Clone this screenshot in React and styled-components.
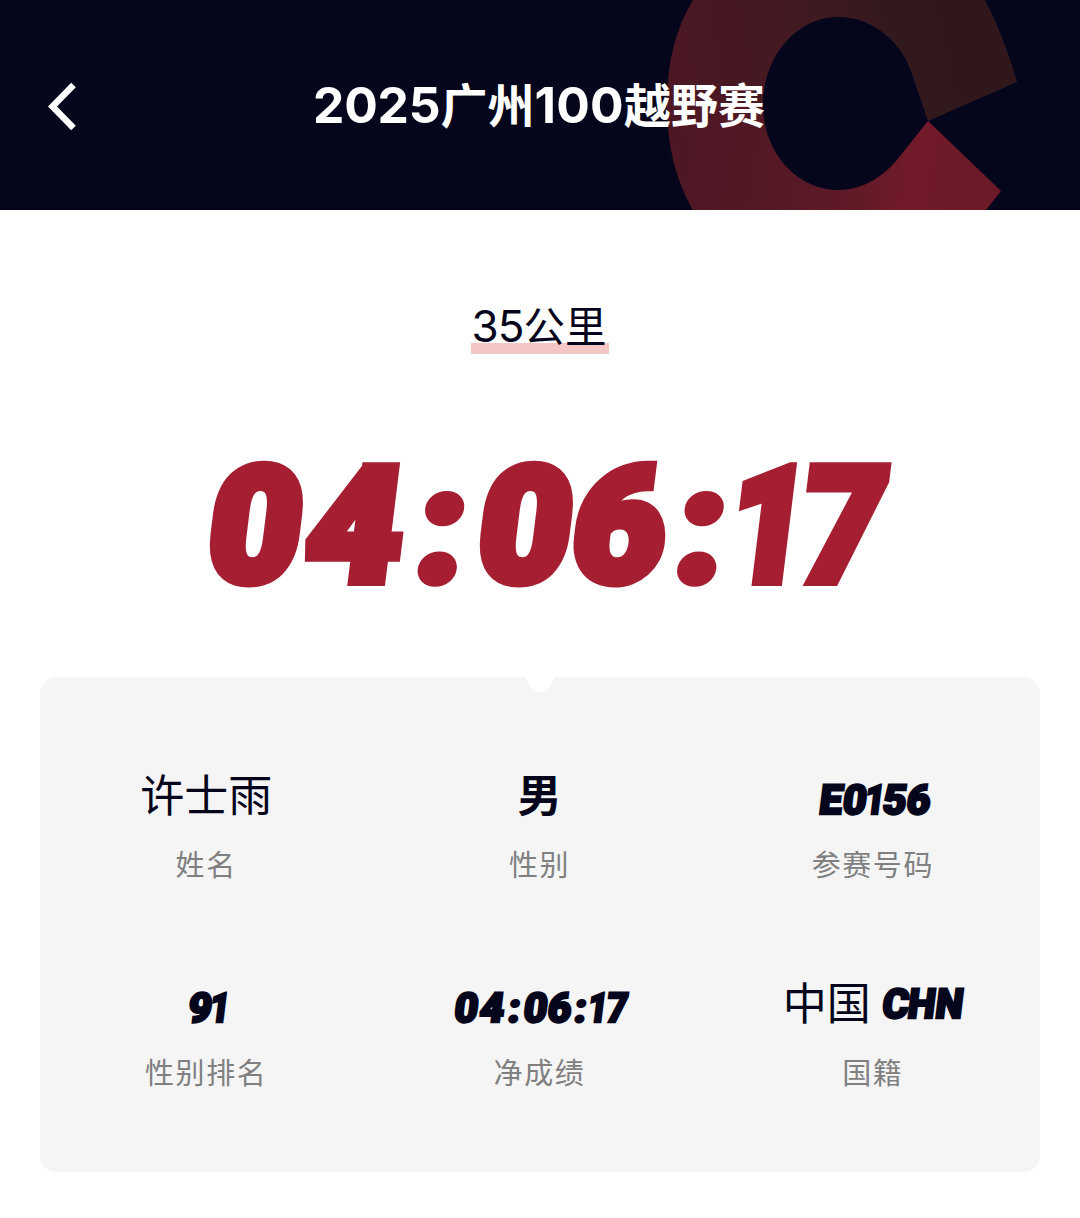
import React from 'react';
import styled, { createGlobalStyle } from 'styled-components';

const GlobalStyle = createGlobalStyle`
    body {
        margin: 0;
        background: #fff;
    }
    * {
        box-sizing: border-box;
    }
`

const Page = styled.div`
    width: 1080px;
    height: 1218px;
    overflow: hidden;
    font-family: Inter, "Noto Sans CJK SC", sans-serif;
    color: #05051b;
`

const Header = styled.header`
    position: relative;
    display: grid;
    grid-template-columns: 124px 1fr 124px;
    align-items: center;
    height: 210px;
    background: #05051b;
    color: #fff;
`

const HeaderArt = styled.svg`
    position: absolute;
    top: 0;
    right: 0;
`

const BackButton = styled.button`
    position: relative;
    display: flex;
    padding: 2px 0 0 46px;
    border: none;
    background: none;
    cursor: pointer;
`

const Title = styled.h1`
    position: relative;
    margin: 0 1px 0 -1px;
    font-size: 47px;
    line-height: 60px;
    font-weight: 700;
    text-align: center;
    white-space: nowrap;
`

const Num = styled.span`
    font-size: 1.06em;
    font-weight: ${(props) => props.weight};
    letter-spacing: ${(props) => props.spacing || 0}px;
`

const Summary = styled.section`
    display: flex;
    flex-direction: column;
    align-items: center;
    height: 467px;
    padding-top: 90px;
`

const Distance = styled.div`
    height: 54px;
    padding: 0 3px 0 1px;
    font-size: 41.5px;
    line-height: 52px;
    white-space: nowrap;
    background: linear-gradient(#f4c6c4, #f4c6c4) 0 100% / 100% 11px no-repeat;
`

const Digits = styled.div`
    display: flex;
    padding-left: 0.11em;
    font-family: Roboto, sans-serif;
    font-weight: 900;
    font-size: ${(props) => props.size}px;
    line-height: 1;
    transform: skewX(-7deg);
    -webkit-text-stroke: 0.062em currentColor;
    stroke-linejoin: round;
`

const Glyph = styled.span`
    display: flex;
    justify-content: center;
    width: ${(props) => props.width}em;
    transform: scale(${(props) => props.stretch || '1, 1'});
    transform-origin: 50% 86%;
`

const FinishTime = styled.div`
    margin-top: 93px;
    color: #a51e32;
`

const Card = styled.section`
    position: relative;
    display: grid;
    grid-template-columns: repeat(3, 1fr);
    grid-auto-rows: 208px;
    height: 495px;
    margin: 0 40px;
    padding-top: 79px;
    border-radius: 16px;
    background: #f5f5f5;
`

const Notch = styled.svg`
    position: absolute;
    top: 0;
    left: 483px;
`

const Cell = styled.div`
    display: flex;
    flex-direction: column;
    align-items: center;
`

const Value = styled.div`
    display: flex;
    align-items: center;
    gap: 7px;
    height: 80px;
    padding-top: ${(props) => props.drop || 0}px;
    padding-right: 1px;
    font-size: 44px;
    line-height: 76px;
    font-weight: ${(props) => (props.bold ? 700 : 400)};
`

const Label = styled.div`
    margin: 8px 1px 0 0;
    font-size: 29px;
    line-height: 44px;
    letter-spacing: 1.6px;
    color: #808080;
`

// advance widths in em
const widths = { '0': 0.594, '4': 0.645, '6': 0.58, '7': 0.55, ':': 0.448, '1': 0.39, C: 0.63, H: 0.68, N: 0.66, E: 0.57 };
const stretches = { '1': '0.84, 1', '7': '0.89, 1', '4': '1.04, 1', ':': '1, 0.97', C: '0.98, 1', H: '0.95, 1', N: '0.95, 1' };

const SlantedText = ({ text, size }) => (
    <Digits size={size}>
        {text.split('').map((char, i) => (
            <Glyph key={i} width={widths[char] || 0.58} stretch={stretches[char]}>{char}</Glyph>
        ))}
    </Digits>
)

const results = [
    { label: '姓名', value: '许士雨' },
    { label: '性别', value: '男', bold: true },
    { label: '参赛号码', code: 'E0156', drop: 8 },
    { label: '性别排名', code: '91', drop: 8 },
    { label: '净成绩', code: '04:06:17', drop: 8 },
    { label: '国籍', value: '中国', code: 'CHN' },
];

export default function App() {
    return (
        <Page>
            <GlobalStyle />
            <Header>
                <HeaderArt width="440" height="210" viewBox="640 0 440 210">
                    <defs>
                        <linearGradient id="upper" gradientUnits="userSpaceOnUse" x1="670" y1="110" x2="960" y2="50">
                            <stop offset="0" stopColor="#4c1723" />
                            <stop offset="0.4" stopColor="#451922" />
                            <stop offset="0.8" stopColor="#32191e" />
                            <stop offset="1" stopColor="#2f171c" />
                        </linearGradient>
                        <linearGradient id="lower" gradientUnits="userSpaceOnUse" x1="670" y1="110" x2="960" y2="160">
                            <stop offset="0" stopColor="#4c1723" />
                            <stop offset="0.4" stopColor="#541925" />
                            <stop offset="0.65" stopColor="#5e1a26" />
                            <stop offset="0.85" stopColor="#731a29" />
                            <stop offset="1" stopColor="#6c1a28" />
                        </linearGradient>
                    </defs>
                    <path fill="url(#upper)" d="M667 105C667 64 675 30 693 0H985C999 27 1009 54 1017 82L928 121L913 77C903 43 874 17 838 17C797 17 763 56 763 105Z" />
                    <path fill="url(#lower)" d="M667 105H763C763 152 797 190 838 190C862 190 881 178 896 161L928 121L1001 191L986 210H693C675 178 667 144 667 105Z" />
                </HeaderArt>
                <BackButton aria-label="返回">
                    <svg width="32" height="50" viewBox="0 0 32 50" fill="none" stroke="#fff" strokeWidth="6.5">
                        <path d="M27.5 4L6.5 25.5L27.5 47" />
                    </svg>
                </BackButton>
                <Title>
                    <Num weight={650} spacing={-0.2}>2025</Num>广州<Num weight={650} spacing={0.3}>100</Num>越野赛
                </Title>
            </Header>
            <Summary>
                <Distance><Num weight={400} spacing={-1}>35</Num>公里</Distance>
                <FinishTime>
                    <SlantedText text="04:06:17" size={160} />
                </FinishTime>
            </Summary>
            <Card>
                <Notch width="34" height="16" viewBox="0 0 34 16">
                    <path fill="#fff" d="M0 0H34C32 0 31 2 30 4C27 11 23 15 17 15C11 15 7 11 4 4C3 2 2 0 0 0Z" />
                </Notch>
                {results.map(({ label, value, code, bold, drop }) => (
                    <Cell key={label}>
                        <Value bold={bold} drop={drop}>
                            {value}
                            {code && <SlantedText text={code} size={41} />}
                        </Value>
                        <Label>{label}</Label>
                    </Cell>
                ))}
            </Card>
        </Page>
    )
}
